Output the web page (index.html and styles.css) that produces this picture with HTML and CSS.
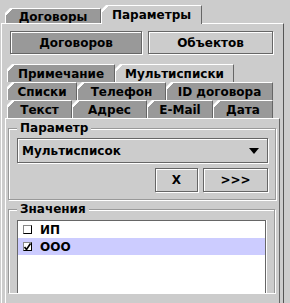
FILE: index.html
```html
<!DOCTYPE html>
<html lang="ru">
<head>
    <meta charset="UTF-8">
    <title>Параметры</title>
    <link rel="stylesheet" href="styles.css">
</head>
<body>
    <div class="window">
        <div class="top-tabs">
            <div class="tab tab-dog">Договоры</div>
            <div class="tab tab-par selected">Параметры</div>
        </div>

        <div class="outer-panel">
            <div class="mode-row">
                <div class="btn btn-dog pressed">Договоров</div>
                <div class="btn btn-obj">Объектов</div>
            </div>

            <div class="inner-tabs">
                <div class="tab-row">
                    <div class="tab w108">Примечание</div>
                    <div class="tab w119 selected">Мультисписки</div>
                </div>
                <div class="tab-row">
                    <div class="tab w70">Списки</div>
                    <div class="tab w89">Телефон</div>
                    <div class="tab w107">ID договора</div>
                </div>
                <div class="tab-row">
                    <div class="tab w65">Текст</div>
                    <div class="tab w75">Адрес</div>
                    <div class="tab w66">E-Mail</div>
                    <div class="tab w60">Дата</div>
                </div>
            </div>

            <div class="inner-panel">
                <div class="group group-param">
                    <div class="group-title">Параметр</div>
                    <div class="combo">
                        <span>Мультисписок</span>
                        <svg class="arrow" width="10" height="6" viewBox="0 0 10 6"><polygon points="0,0 10,0 5,6" fill="#000"/></svg>
                    </div>
                    <div class="actions">
                        <div class="btn btn-x">X</div>
                        <div class="btn btn-next">&gt;&gt;&gt;</div>
                    </div>
                </div>

                <div class="group group-values">
                    <div class="group-title">Значения</div>
                    <div class="list">
                        <div class="item">
                            <span class="check"></span>
                            <span>ИП</span>
                        </div>
                        <div class="item active">
                            <span class="check">
                                <svg width="7" height="7" viewBox="0 0 7 7"><path d="M0.5 4 L2.5 6.5 L6.5 0.5" stroke="#000" stroke-width="1.6" fill="none"/></svg>
                            </span>
                            <span>ООО</span>
                        </div>
                    </div>
                </div>
            </div>
        </div>
    </div>
</body>
</html>
```

FILE: styles.css
```css
body {
    margin: 0;
    background: #cccccc;
    font-family: "DejaVu Sans", sans-serif;
    font-weight: bold;
    font-size: 12px;
    color: #000;
    width: 290px;
    height: 303px;
    overflow: hidden;
}

.window {
    padding: 5px 0 0 1px;
}

/* вкладки */
.top-tabs {
    display: flex;
    align-items: flex-end;
    height: 18px;
    padding-left: 4px;
}

.tab {
    box-sizing: border-box;
    display: flex;
    align-items: center;
    justify-content: center;
    border-top: 1px solid #fff;
    border-left: 1px solid #fff;
    border-right: 1px solid #666;
    background: linear-gradient(135deg, #fff 0 4.4px, #999999 4.4px);
    clip-path: polygon(5px 0, 100% 0, 100% 100%, 0 100%, 0 5px);
    white-space: nowrap;
}

.tab.selected {
    background: linear-gradient(135deg, #fff 0 4.4px, #cccccc 4.4px);
    position: relative;
    z-index: 1;
}

.tab-dog {
    width: 96px;
    height: 15px;
    padding-top: 1px;
}

.tab-par {
    width: 101px;
    height: 19px;
    margin-bottom: -1px;
    padding-bottom: 1px;
}

.outer-panel {
    box-sizing: border-box;
    width: 283px;
    height: 280px;
    border-top: 1px solid #fff;
    border-left: 1px solid #fff;
    border-right: 1px solid #555;
    padding: 7px 0 0 0;
}

.mode-row {
    display: flex;
    gap: 6px;
    padding-left: 8px;
}

.btn {
    box-sizing: border-box;
    display: flex;
    align-items: center;
    justify-content: center;
    height: 23px;
    border: 1px solid #666;
    box-shadow: inset 1px 1px 0 #fff, 1px 1px 0 #fff;
}

.btn.pressed {
    background: #999999;
}

.btn-dog {
    width: 132px;
}

.btn-obj {
    width: 125px;
}

.inner-tabs {
    margin-top: 10px;
    padding-left: 5px;
}

.tab-row {
    display: flex;
    height: 18px;
}

.w108 { width: 108px; }
.w119 { width: 119px; }
.w70 { width: 70px; }
.w89 { width: 89px; }
.w107 { width: 107px; }
.w65 { width: 65px; }
.w75 { width: 75px; }
.w66 { width: 66px; }
.w60 { width: 60px; }

.inner-panel {
    box-sizing: border-box;
    margin-left: 3px;
    width: 275px;
    height: 185px;
    border-top: 1px solid #fff;
    border-left: 1px solid #fff;
    border-right: 1px solid #666;
    padding: 9px 3px 0 2px;
}

/* группы */
.group {
    display: flex;
    flex-direction: column;
    border: 1px solid #999;
    box-shadow: inset 1px 1px 0 #fff, 1px 1px 0 #fff;
    padding: 0 7px 7px 8px;
}

.group-values {
    box-sizing: border-box;
    margin-top: 9px;
    margin-right: 1px;
    padding-right: 8px;
    padding-bottom: 0;
    border-bottom: none;
    height: 84px;
}

.group-title {
    align-self: flex-start;
    margin-top: -8px;
    padding: 0 3px;
    line-height: 14px;
    background: #cccccc;
}

.combo {
    box-sizing: border-box;
    display: flex;
    align-items: center;
    justify-content: space-between;
    margin-top: 3px;
    height: 25px;
    padding: 0 8px 0 4px;
    border: 1px solid #666;
    box-shadow: inset 1px 1px 0 #fff, 1px 1px 0 #fff;
}

.actions {
    display: flex;
    justify-content: flex-end;
    gap: 5px;
    margin-top: 5px;
}

.btn-x {
    width: 43px;
    height: 24px;
}

.btn-next {
    width: 65px;
    height: 24px;
}

/* список значений */
.list {
    flex: 1;
    margin-top: 4px;
    background: #fff;
    border: 1px solid #666;
    border-bottom: none;
    box-shadow: 1px 0 0 #fff;
}

.item {
    display: flex;
    align-items: center;
    gap: 8px;
    height: 17px;
    padding-left: 5px;
}

.item.active {
    background: #ccccff;
}

.check {
    box-sizing: border-box;
    display: flex;
    align-items: center;
    justify-content: center;
    width: 9px;
    height: 9px;
    border: 1px solid #888;
    border-right-color: #000;
    border-bottom-color: #000;
    background: #fff;
}
```
